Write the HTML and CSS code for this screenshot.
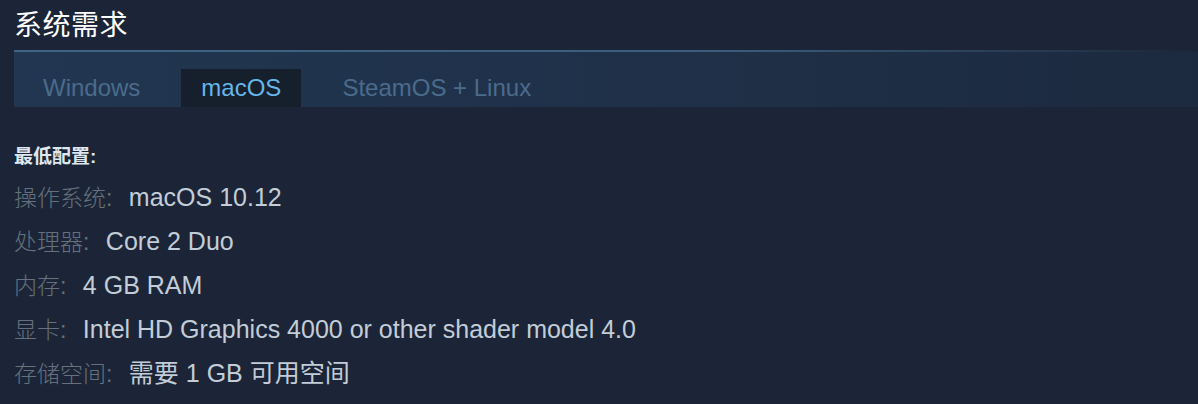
FILE: index.html
```html
<!DOCTYPE html>
<html lang="zh">
<head>
    <meta charset="UTF-8">
    <meta name="viewport" content="width=device-width, initial-scale=1.0">
    <title>系统需求</title>
    <link rel="stylesheet" href="styles.css">
</head>
<body>

    <!-- Cabecera -->
    <div class="sysreq">
        <h2 class="sysreq-title">系统需求</h2>

        <!-- Pestañas -->
        <div class="sysreq-tabs">
            <div class="tab">Windows</div>
            <div class="tab active">macOS</div>
            <div class="tab">SteamOS + Linux</div>
        </div>

        <!-- Contenido -->
        <div class="sysreq-contents">
            <div class="req-head">最低配置:</div>
            <ul class="req-list">
                <li><span class="req-label">操作系统:</span> <span class="req-value">macOS 10.12</span></li>
                <li><span class="req-label">处理器:</span> <span class="req-value">Core 2 Duo</span></li>
                <li><span class="req-label">内存:</span> <span class="req-value">4 GB RAM</span></li>
                <li><span class="req-label">显卡:</span> <span class="req-value">Intel HD Graphics 4000 or other shader model 4.0</span></li>
                <li><span class="req-label">存储空间:</span> <span class="req-value">需要 1 GB 可用空间</span></li>
            </ul>
        </div>
    </div>

</body>
</html>
```

FILE: styles.css
```css
/* Estilos generales */
body {
    margin: 0;
    background-color: #1b2537;
    font-family: Arial, "Liberation Sans", "Noto Sans CJK SC", sans-serif;
    overflow: hidden;
}

.sysreq {
    padding: 0 0 0 14px;
}

/* Título */
.sysreq-title {
    margin: 0;
    padding-top: 10px;
    height: 52px;
    box-sizing: border-box;
    font-size: 28px;
    font-weight: normal;
    color: #ffffff;
    line-height: 32px;
    letter-spacing: 0.5px;
    border-bottom: 2px solid transparent;
    border-image: linear-gradient(to right, #3f6584 0%, #3a5d7b 60%, rgba(58, 93, 123, 0.3) 90%, transparent 100%) 1;
}

/* Pestañas */
.sysreq-tabs {
    display: flex;
    align-items: flex-end;
    height: 55px;
    padding-left: 9px;
    background: linear-gradient(to right, #223651 0%, #1f3149 50%, #1c2a3f 100%);
}

.tab {
    height: 38px;
    line-height: 38px;
    padding: 0 20px;
    font-size: 24px;
    color: #4b6b8c;
    margin-right: 21px;
}

.tab.active {
    background-color: #161f2c;
    color: #66b6ea;
}

/* Contenido */
.sysreq-contents {
    padding-top: 40px;
}

.req-head {
    font-size: 19px;
    font-weight: bold;
    color: #dfe6ee;
    line-height: 20px;
    height: 20px;
    margin-bottom: 8px;
}

.req-list {
    list-style: none;
    margin: 0;
    padding: 0;
}

.req-list li {
    height: 44px;
    line-height: 44px;
}

.req-label {
    font-size: 23px;
    font-weight: 300;
    color: #66717d;
    margin-right: 12px;
}

.req-value {
    font-size: 25px;
    color: #c3cdd8;
}
```
